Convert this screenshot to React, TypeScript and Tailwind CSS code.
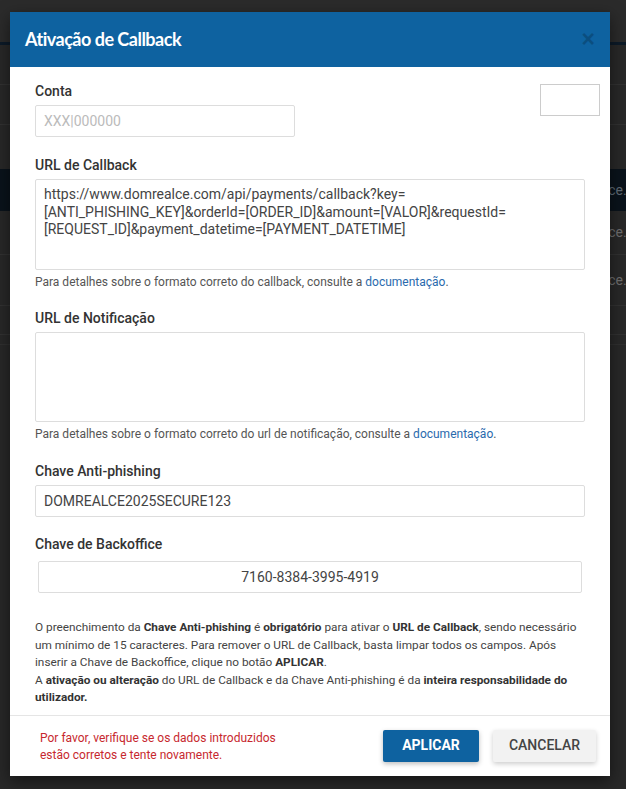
import React from "react";

function Label({ children, className = "" }: { children: React.ReactNode; className?: string }) {
  return (
    <div className={"text-[14px] leading-[20px] font-medium text-[#333] mb-[4px] " + className}>{children}</div>
  );
}

function Help({ children }: { children: React.ReactNode }) {
  return <div className="text-[12px] leading-[17px] text-[#555] mt-[4px]">{children}</div>;
}

export default function App() {
  return (
    <div className="relative min-h-[789px] w-full overflow-hidden bg-[#282828] font-[Roboto,sans-serif]">
      {/* underlying page */}
      <div className="h-[42px] bg-[#2b2b2b]" />
      <div className="h-[3px] bg-[#0c1a28]" />
      <div className="h-[40px] border-b border-[#323232]" />
      <div className="h-[40px] border-b border-[#323232]" />
      <div className="h-[44px]" />
      <div className="flex h-[42px] items-center bg-[#0a131b] pl-[557px] text-[14px] text-[#5f6a74] whitespace-nowrap">
        domrealce.com
      </div>
      <div className="flex h-[44px] items-center border-b border-[#323232] pl-[557px] text-[14px] text-[#6e6e6e] whitespace-nowrap">
        domrealce.
      </div>
      <div className="flex h-[51px] items-center border-b border-[#323232] pl-[557px] text-[14px] text-[#6e6e6e] whitespace-nowrap">
        domrealce.
      </div>
      <div className="h-[29px] border-b border-[#323232]" />
      <div className="h-[10px] border-b border-[#303030]" />

      {/* modal */}
      <div className="absolute left-[10px] top-[12px] w-[600px] bg-white shadow-[0_5px_15px_rgba(0,0,0,0.5)]">
        <div className="flex h-[55px] items-center justify-between bg-[#0e62a0] pl-[15px] pr-[15px]">
          <div className="font-['Lato',sans-serif] text-[18px] font-bold tracking-[-0.5px] text-white">Ativação de Callback</div>
          <div className="font-['Liberation_Sans',sans-serif] text-[23px] font-bold leading-none text-black opacity-20">×</div>
        </div>

        <div className="relative px-[25px] pt-[14px] pb-[8px]">
          <div className="absolute right-[10px] top-[17px] h-[32px] w-[60px] border border-[#ccc]" />

          <Label>Conta</Label>
          <div className="flex h-[32px] w-[260px] items-center rounded-[2px] border border-[#ddd] px-[8px] text-[14px] text-[#bbb]">
            XXX|000000
          </div>

          <Label className="mt-[18px]">URL de Callback</Label>
          <div className="h-[91px] rounded-[2px] border border-[#ddd] px-[8px] pt-[6px] text-[14px] leading-[17.5px] text-[#444]">
            https://www.domrealce.com/api/payments/callback?key=
            <br />
            [ANTI_PHISHING_KEY]&amp;orderId=[ORDER_ID]&amp;amount=[VALOR]&amp;requestId=
            <br />
            [REQUEST_ID]&amp;payment_datetime=[PAYMENT_DATETIME]
          </div>
          <Help>
            Para detalhes sobre o formato correto do callback, consulte a{" "}
            <span className="text-[#2a6aad]">documentação</span>.
          </Help>

          <Label className="mt-[17px]">URL de Notificação</Label>
          <div className="h-[90px] rounded-[2px] border border-[#ddd]" />
          <Help>
            Para detalhes sobre o formato correto do url de notificação, consulte a{" "}
            <span className="text-[#2a6aad]">documentação</span>.
          </Help>

          <Label className="mt-[18px]">Chave Anti-phishing</Label>
          <div className="flex h-[32px] items-center rounded-[2px] border border-[#ddd] px-[8px] text-[14px] text-[#444]">
            DOMREALCE2025SECURE123
          </div>

          <Label className="mt-[17px] mb-[7px]">Chave de Backoffice</Label>
          <div className="mx-[3px] flex h-[32px] items-center justify-center rounded-[2px] border border-[#ddd] text-[14px] text-[#444]">
            7160-8384-3995-4919
          </div>

          <p className="mt-[26px] whitespace-nowrap text-[11.8px] leading-[17.5px] text-[#444]">
            O preenchimento da <b className="font-bold text-[#333]">Chave Anti-phishing</b> é{" "}
            <b className="font-bold text-[#333]">obrigatório</b> para ativar o{" "}
            <b className="font-bold text-[#333]">URL de Callback</b>, sendo necessário
            <br />
            um mínimo de 15 caracteres. Para remover o URL de Callback, basta limpar todos os campos. Após
            <br />
            inserir a Chave de Backoffice, clique no botão <b className="font-bold text-[#333]">APLICAR</b>.
            <br />
            A <b className="font-bold text-[#333]">ativação ou alteração</b> do URL de Callback e da Chave Anti-phishing é da{" "}
            <b className="font-bold text-[#333]">inteira responsabilidade do</b>
            <br />
            <b className="font-bold text-[#333]">utilizador.</b>
          </p>
        </div>

        <div className="flex items-start justify-between border-t border-[#e5e5e5] pl-[30px] pr-[14px] pt-[14px] pb-[12px]">
          <div className="text-[12px] leading-[17px] text-[#c7282e]">
            Por favor, verifique se os dados introduzidos
            <br />
            estão corretos e tente novamente.
          </div>
          <div className="flex gap-[14px]">
            <button className="h-[32px] w-[96px] rounded-[2px] bg-[#0e62a0] text-[14px] font-bold text-white shadow-[0_2px_5px_rgba(0,0,0,0.26)]">
              APLICAR
            </button>
            <button className="h-[32px] w-[103px] rounded-[2px] bg-[#f2f2f2] text-[14px] font-medium text-[#444] shadow-[0_2px_5px_rgba(0,0,0,0.2)]">
              CANCELAR
            </button>
          </div>
        </div>
      </div>
    </div>
  );
}
